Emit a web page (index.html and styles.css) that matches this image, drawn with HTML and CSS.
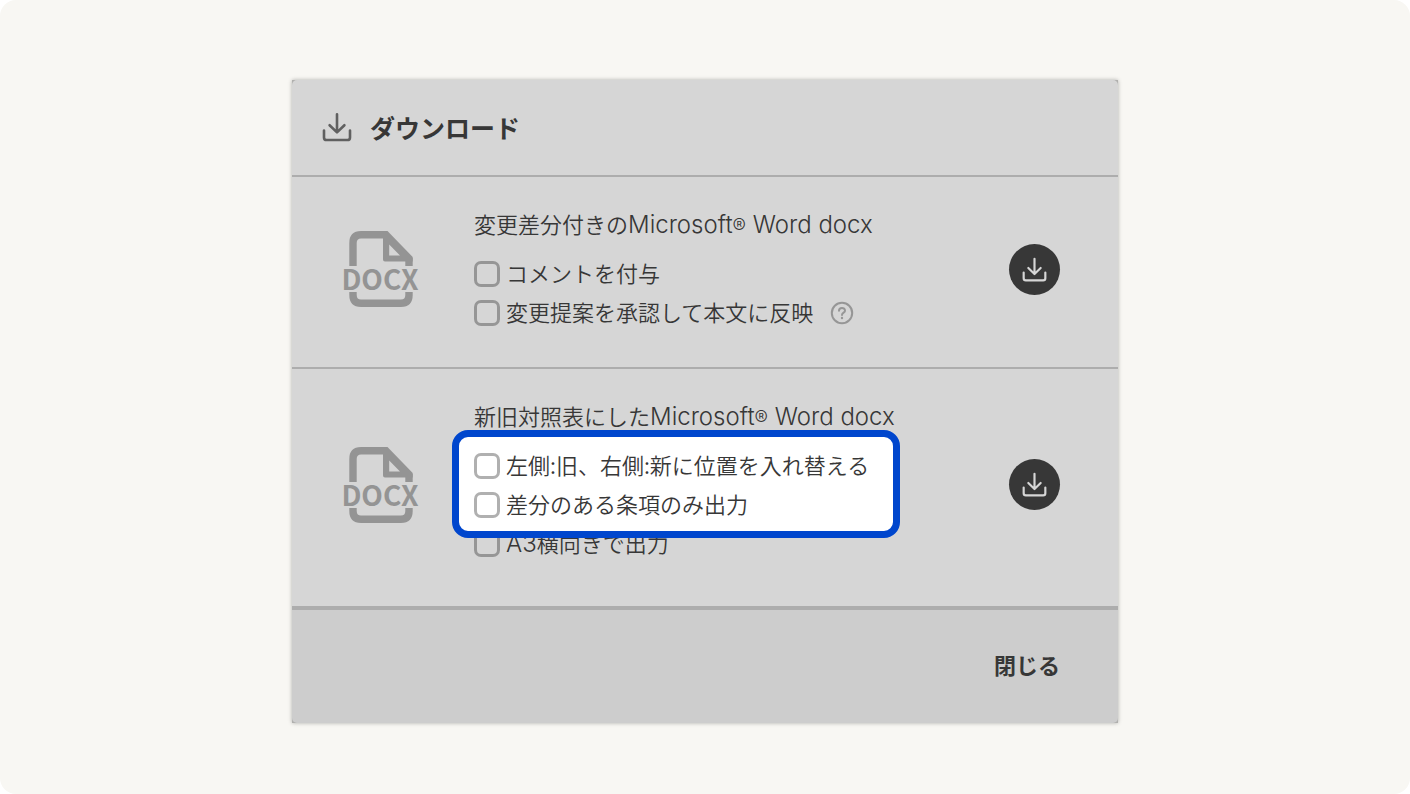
FILE: index.html
```html
<!DOCTYPE html>
<html lang="ja">
<head>
<meta charset="utf-8">
<meta name="viewport" content="width=device-width, initial-scale=1">
<title>ダウンロード</title>
<link rel="stylesheet" href="styles.css">
</head>
<body>
<svg class="defs" aria-hidden="true">
  <symbol id="download" viewBox="0 0 30 30">
    <path d="M15 2.2V20M7.6 13.2L15 20.4L22.4 13.2M2 18.6V25.4Q2 28 4.6 28H25.4Q28 28 28 25.4V18.6" fill="none" stroke="currentColor" stroke-width="2.6" stroke-linecap="round" stroke-linejoin="round"/>
  </symbol>
  <symbol id="file" viewBox="0 0 76 76">
    <path d="M10 35V12Q10 3.8 18 3.8H42M66 27V35M10 61V64Q10 72.200 18 72.200H58Q66 72.200 66 64V61" fill="none" stroke="currentColor" stroke-width="7.4"/>
    <path fill-rule="evenodd" d="M40 .1H44.500L69.700 26V30.500H42Q40 30.500 40 28.500ZM46.200 13.500V24.500H57Z" fill="currentColor"/>
  </symbol>
</svg>
<main class="stage">
  <section class="dialog" role="dialog" aria-labelledby="dialog-title">
    <header class="header">
      <svg class="header-icon" aria-hidden="true"><use href="#download"/></svg>
      <h1 class="title" id="dialog-title">ダウンロード</h1>
    </header>
    <section class="row">
      <svg class="file-icon" viewBox="0 0 76 76"><use href="#file"/><text x="37" y="59" text-anchor="middle" class="docx-text">DOCX</text></svg>
      <div class="details">
        <h2 class="name">変更差分付きの<span class="latin">Microsoft<span class="reg">®</span> Word docx</span></h2>
        <label class="option"><input class="check" type="checkbox"><span class="option-text">コメントを付与</span></label>
        <div class="option-line">
          <label class="option"><input class="check" type="checkbox"><span class="option-text">変更提案を承認して本文に反映</span></label>
          <button class="help" type="button" aria-label="ヘルプ">
            <svg class="help-icon" viewBox="0 0 24 24" aria-hidden="true">
              <circle cx="12" cy="12" r="10.200" fill="none" stroke="currentColor" stroke-width="2"/>
              <path d="M9 9.800C9 6 15 6 15 9.700C15 11.800 12 11.600 12 14" fill="none" stroke="currentColor" stroke-width="2" stroke-linecap="round"/>
              <circle cx="12" cy="17" r="1.200" fill="currentColor"/>
            </svg>
          </button>
        </div>
      </div>
      <button class="download" type="button" aria-label="ダウンロード"><svg class="download-icon" aria-hidden="true"><use href="#download"/></svg></button>
    </section>
    <section class="row row-last">
      <svg class="file-icon" viewBox="0 0 76 76"><use href="#file"/><text x="37" y="59" text-anchor="middle" class="docx-text">DOCX</text></svg>
      <div class="details">
        <h2 class="name">新旧対照表にした<span class="latin">Microsoft<span class="reg">®</span> Word docx</span></h2>
        <div class="highlight">
          <label class="option"><input class="check" type="checkbox"><span class="option-text">左側:旧、右側:新に位置を入れ替える</span></label>
          <label class="option"><input class="check" type="checkbox"><span class="option-text">差分のある条項のみ出力</span></label>
        </div>
        <label class="option"><input class="check" type="checkbox"><span class="option-text"><span class="latin">A3</span>横向きで出力</span></label>
      </div>
      <button class="download" type="button" aria-label="ダウンロード"><svg class="download-icon" aria-hidden="true"><use href="#download"/></svg></button>
    </section>
    <footer class="footer">
      <button class="close" type="button">閉じる</button>
    </footer>
  </section>
</main>
</body>
</html>
```
FILE: styles.css
```css
* { box-sizing: border-box; }

body {
  margin: 0;
  background: #fff;
  color: #373737;
  font-family: "Noto Sans CJK JP", sans-serif;
  font-size: 22px;
  font-weight: 350;
  line-height: 32px;
}

button {
  padding: 0;
  border: 0;
  background: none;
  color: inherit;
  font: inherit;
  cursor: pointer;
}

svg { display: block; }

.defs {
  position: absolute;
  width: 0;
  height: 0;
}

.stage {
  min-height: 100vh;
  padding: 80px 24px 71px;
  border-radius: 16px;
  background: #f8f7f3;
}

.dialog {
  max-width: 826px;
  margin: 0 auto;
  background: #b0b0ae;
  box-shadow: 0 0 4px rgba(0, 0, 0, .3);
}

.header {
  display: flex;
  align-items: center;
  gap: 18px;
  padding: 31px 30px 32px;
  border-bottom: 2px solid #adadad;
  border-radius: 5px 5px 0 0;
  background: #d6d6d6;
}

.header-icon {
  width: 30px;
  height: 30px;
  color: #606060;
}

.title {
  margin: 0;
  font-size: 25px;
  font-weight: 700;
  line-height: 32px;
}

.row {
  display: grid;
  grid-template-columns: 76px 1fr 51px;
  align-items: center;
  column-gap: 55px;
  padding: 0 58px 0 51px;
  border-bottom: 2px solid #adadad;
  background: #d6d6d6;
}

.row-last { border-bottom-width: 4px; }

.file-icon {
  width: 76px;
  height: 76px;
  margin-bottom: 6px;
  overflow: visible;
  color: #949494;
}

.docx-text {
  fill: currentColor;
  font-size: 28px;
  font-weight: 700;
}

.details {
  display: flex;
  flex-direction: column;
  align-items: flex-start;
  padding: 30px 0 35px;
}

.row-last .details { padding-bottom: 43px; }

.name {
  margin: 0 0 15px;
  font-size: 22px;
  font-weight: inherit;
  line-height: 32px;
}

.latin {
  font-family: Inter, sans-serif;
  font-size: 24px;
  line-height: 1;
}

.reg { font-size: 20px; }

.option {
  display: flex;
  align-items: center;
  gap: 6px;
  height: 39px;
}

.option-text { padding-bottom: 4px; }

.check {
  width: 26px;
  height: 26px;
  margin: 0;
  border: 3px solid #969696;
  border-radius: 7px;
  appearance: none;
}

.option-line {
  display: flex;
  align-items: center;
  gap: 17px;
}

.help { color: #969696; }

.help-icon {
  width: 24px;
  height: 24px;
}

.highlight {
  position: relative;
  z-index: 1;
}

.highlight::before {
  content: "";
  position: absolute;
  z-index: -1;
  inset: -16px -31px -14px -22px;
  border: 7px solid #0046cd;
  border-radius: 16px;
  background: #fff;
}

.highlight .check { border-color: #b0b0b0; }

.download {
  display: grid;
  place-items: center;
  width: 51px;
  height: 51px;
  margin-bottom: 6px;
  border-radius: 50%;
  background: #373737;
  color: #d6d6d6;
}

.download-icon {
  width: 25px;
  height: 25px;
}

.footer {
  display: flex;
  justify-content: flex-end;
  padding: 38px 58px 43px;
  border-radius: 0 0 5px 5px;
  background: #cdcdcd;
}

.close { font-weight: 700; }
```
